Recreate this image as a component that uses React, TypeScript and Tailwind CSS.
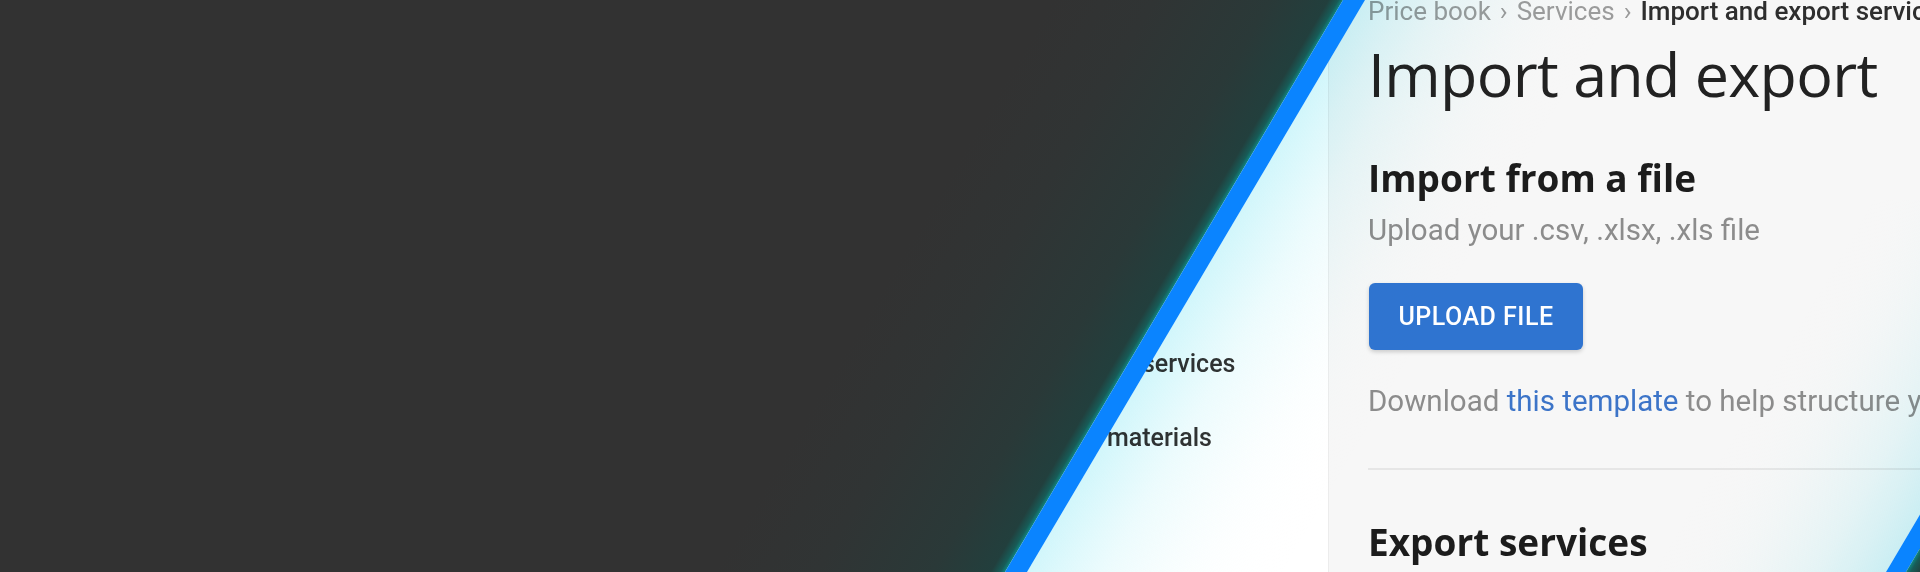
import React from "react";

const roboto = { fontFamily: "Roboto, 'Liberation Sans', sans-serif" };
const openSans = { fontFamily: "'Open Sans', 'Noto Sans', sans-serif" };

function Overlay() {
  return (
    <svg
      className="pointer-events-none absolute left-0 top-0"
      width="1920"
      height="572"
      viewBox="0 0 1920 572"
    >
      <defs>
        <linearGradient id="darkGlow1" gradientUnits="userSpaceOnUse" x1="1343" y1="0" x2="1127.8" y2="-127.2">
          <stop offset="0" stopColor="#10857f" />
          <stop offset="0.016" stopColor="#175c58" />
          <stop offset="0.05" stopColor="#223f3d" />
          <stop offset="0.25" stopColor="#2a3938" />
          <stop offset="0.65" stopColor="#303434" />
          <stop offset="1" stopColor="#323232" />
        </linearGradient>
        <linearGradient id="lightGlow1" gradientUnits="userSpaceOnUse" x1="1365" y1="0" x2="1554.4" y2="111.9">
          <stop offset="0" stopColor="#c6f4fa" stopOpacity="0.8" />
          <stop offset="0.3" stopColor="#d0f6fa" stopOpacity="0.4" />
          <stop offset="0.65" stopColor="#e2f9fb" stopOpacity="0.14" />
          <stop offset="1" stopColor="#ffffff" stopOpacity="0" />
        </linearGradient>
        <linearGradient id="lightGlow2" gradientUnits="userSpaceOnUse" x1="1886" y1="572" x2="1713.8" y2="470.3">
          <stop offset="0" stopColor="#c6f4fa" stopOpacity="0.8" />
          <stop offset="0.3" stopColor="#d0f6fa" stopOpacity="0.4" />
          <stop offset="0.65" stopColor="#e2f9fb" stopOpacity="0.14" />
          <stop offset="1" stopColor="#ffffff" stopOpacity="0" />
        </linearGradient>
        <linearGradient id="darkGlow2" gradientUnits="userSpaceOnUse" x1="1906" y1="572" x2="2121.2" y2="699.2">
          <stop offset="0" stopColor="#10857f" />
          <stop offset="0.016" stopColor="#175c58" />
          <stop offset="0.05" stopColor="#223f3d" />
          <stop offset="0.25" stopColor="#2a3938" />
          <stop offset="1" stopColor="#323232" />
        </linearGradient>
      </defs>
      <polygon className="mix-blend-multiply" points="1365,0 1920,0 1920,572 1027,572" fill="url(#lightGlow1)" />
      <polygon className="mix-blend-multiply" points="1920,514.4 1886,572 1400,572 1400,200 1920,200" fill="url(#lightGlow2)" />
      <polygon points="0,0 1343,0 1005,572 0,572" fill="url(#darkGlow1)" />
      <polygon points="1343,0 1365,0 1027,572 1005,572" fill="#0a84ff" />
      <polygon points="1886,572 1920,514.4 1920,548.3 1906,572" fill="#0a84ff" />
      <polygon points="1906,572 1920,548.3 1920,572" fill="url(#darkGlow2)" />
    </svg>
  );
}

export default function App() {
  return (
    <div className="relative isolate h-[572px] w-[1920px] overflow-hidden bg-white">
      <div className="flex h-full w-full">
        {/* Sidebar */}
        <aside
          className="flex h-full w-[1328px] shrink-0 flex-col items-start bg-white pl-[1107px] pt-[349px] text-[25px] font-medium leading-[30px] text-[#333333]"
          style={roboto}
        >
          <div className="ml-[35px] whitespace-nowrap">services</div>
          <div className="mt-[44px] whitespace-nowrap">materials</div>
        </aside>

        {/* Main */}
        <main className="flex h-full min-w-0 flex-1 flex-col border-l border-[#ececec] bg-[#f7f7f7] pl-[39px]">
          <nav
            className="flex items-center whitespace-nowrap pt-px text-[26px] leading-[20px] text-[#9b9b9b]"
            style={roboto}
          >
            <span>Price book</span>
            <span className="px-[9px]">›</span>
            <span>Services</span>
            <span className="px-[9px]">›</span>
            <span className="font-medium text-[#2e2e2e]">Import and export services</span>
          </nav>

          <h1
            className="mt-[21px] whitespace-nowrap text-[61px] font-normal leading-[64px] tracking-[-0.7px] text-[#222222]"
            style={openSans}
          >
            Import and export
          </h1>

          <h2
            className="mt-[50px] whitespace-nowrap text-[37px] font-bold leading-[44px] text-[#1c1c1c]"
            style={openSans}
          >
            Import from a file
          </h2>

          <p className="mt-[13px] whitespace-nowrap text-[29.5px] leading-[34px] text-[#8c8c8c]" style={roboto}>
            Upload your .csv, .xlsx, .xls file
          </p>

          <div className="mt-[36px]">
            <button
              className="ml-px flex h-[67px] w-[214px] items-center justify-center rounded-[6px] bg-[#2f74d0] text-[25px] font-medium tracking-[0.5px] text-white shadow-[0_2px_4px_rgba(0,0,0,0.18)]"
              style={roboto}
            >
              UPLOAD FILE
            </button>
          </div>

          <p className="mt-[34px] whitespace-nowrap text-[29.5px] leading-[34px] text-[#8c8c8c]" style={roboto}>
            Download <span className="text-[#3c74c8]">this template</span> to help structure your file.
          </p>

          <div className="mt-[50px] h-[2px] w-full bg-[#e6e6e6]" />

          <h2
            className="mt-[50px] whitespace-nowrap text-[37px] font-bold leading-[44px] text-[#1c1c1c]"
            style={openSans}
          >
            Export services
          </h2>
        </main>
      </div>
      <Overlay />
    </div>
  );
}
